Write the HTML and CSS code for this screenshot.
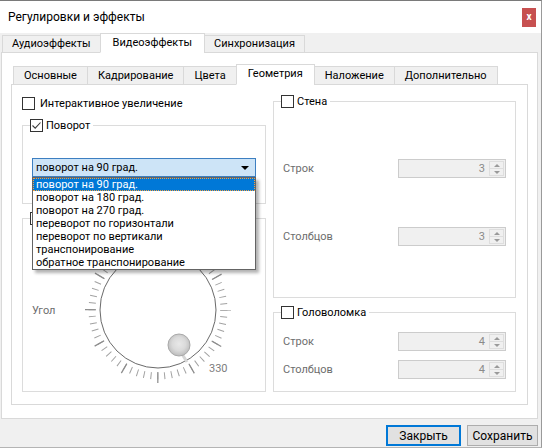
FILE: index.html
```html
<!DOCTYPE html>
<html lang="ru">
<head>
<meta charset="utf-8">
<title>Регулировки и эффекты</title>
<link rel="stylesheet" href="styles.css">
</head>
<body>
<div class="window">
  <header class="titlebar">
    <span class="title">Регулировки и эффекты</span>
    <span class="close">x</span>
  </header>
  <div class="main">
    <nav class="tabs outer-tabs">
      <span class="tab">Аудиоэффекты</span>
      <span class="tab active">Видеоэффекты</span>
      <span class="tab">Синхронизация</span>
    </nav>
    <section class="outer-pane">
      <nav class="tabs inner-tabs">
        <span class="tab">Основные</span>
        <span class="tab">Кадрирование</span>
        <span class="tab">Цвета</span>
        <span class="tab active">Геометрия</span>
        <span class="tab">Наложение</span>
        <span class="tab">Дополнительно</span>
      </nav>
      <div class="inner-pane">
        <div class="col">
          <label class="check-row"><span class="cb"></span>Интерактивное увеличение</label>
          <fieldset class="group rotate">
            <legend><span class="cb"><svg viewBox="0 0 11 11" width="11" height="11"><path d="M1.5 5.5 L4.2 8.2 L9.5 2.5" fill="none" stroke="#3a3a3a" stroke-width="1.1"/></svg></span>Поворот</legend>
            <div class="combo-wrap">
              <div class="combo"><span>поворот на 90 град.</span><span class="arrow"></span></div>
              <ul class="dropdown">
                <li class="selected">поворот на 90 град.</li>
                <li>поворот на 180 град.</li>
                <li>поворот на 270 град.</li>
                <li>переворот по горизонтали</li>
                <li>переворот по вертикали</li>
                <li>транспонирование</li>
                <li>обратное транспонирование</li>
              </ul>
            </div>
          </fieldset>
          <fieldset class="group angle">
            <legend><span class="cb"></span></legend>
            <div class="angle-row">
              <span class="muted angle-label">Угол</span>
              <svg class="dial" viewBox="0 0 160 160" width="160" height="160">
                <defs>
                  <radialGradient id="knob" cx="50%" cy="45%" r="55%">
                    <stop offset="0" stop-color="#e8e8e8"/>
                    <stop offset="0.55" stop-color="#dadada"/>
                    <stop offset="1" stop-color="#bcbcbc"/>
                  </radialGradient>
                </defs>
                <circle cx="80" cy="80" r="66" fill="none" stroke="#a2a2a2" stroke-width="7" stroke-dasharray="1 5.9115" stroke-dashoffset="0.5"/>
                <circle cx="80" cy="80" r="67.5" fill="none" stroke="#8c8c8c" stroke-width="11" stroke-dasharray="1.2 34.143" stroke-dashoffset="0.6"/>
                <circle cx="80" cy="80" r="58" fill="#fff" stroke="#6a6a6a" stroke-width="1"/>
                <line x1="104" y1="124" x2="109" y2="132" stroke="#d6d6d6" stroke-width="3"/>
                <circle cx="101" cy="115" r="11" fill="url(#knob)" stroke="#a9a9a9" stroke-width="1"/>
                <text x="131" y="142" class="dial-num">330</text>
              </svg>
            </div>
          </fieldset>
        </div>
        <div class="col">
          <fieldset class="group wall">
            <legend><span class="cb"></span>Стена</legend>
            <div class="form-grid">
              <span class="muted">Строк</span>
              <div class="spin"><span class="value">3</span><span class="spin-btns"><i class="up"></i><i class="down"></i></span></div>
              <span class="muted">Столбцов</span>
              <div class="spin"><span class="value">3</span><span class="spin-btns"><i class="up"></i><i class="down"></i></span></div>
            </div>
          </fieldset>
          <fieldset class="group puzzle">
            <legend><span class="cb"></span>Головоломка</legend>
            <div class="form-grid">
              <span class="muted">Строк</span>
              <div class="spin"><span class="value">4</span><span class="spin-btns"><i class="up"></i><i class="down"></i></span></div>
              <span class="muted">Столбцов</span>
              <div class="spin"><span class="value">4</span><span class="spin-btns"><i class="up"></i><i class="down"></i></span></div>
            </div>
          </fieldset>
        </div>
      </div>
    </section>
    <footer class="buttons">
      <button class="btn default">Закрыть</button>
      <button class="btn">Сохранить</button>
    </footer>
  </div>
</div>
</body>
</html>
```
FILE: styles.css
```css
* { box-sizing: border-box; }
html, body { margin: 0; padding: 0; }
body {
  font: 11px/1 Roboto, "Liberation Sans", sans-serif;
  color: #000;
  background: #f0f0f0;
}
.window {
  width: 542px;
  height: 448px;
  background: #f0f0f0;
  border-top: 1px solid #7a7a7a;
  border-right: 1px solid #9a9a9a;
  border-bottom: 1px solid #b4b4b4;
  display: flex;
  flex-direction: column;
}
.titlebar {
  height: 32px;
  flex: none;
  background: #fff;
  display: flex;
  align-items: center;
  justify-content: space-between;
  padding: 0 5px 0 8px;
}
.title { font-size: 12px; }
.close {
  width: 14px;
  height: 19px;
  background: #c75050;
  color: #fff;
  font-size: 10px;
  font-weight: bold;
  display: flex;
  align-items: center;
  justify-content: center;
}
.main {
  display: flex;
  flex-direction: column;
  padding: 0 3px 0 1px;
}
.tabs {
  display: flex;
  align-items: flex-end;
  position: relative;
  z-index: 1;
  margin-bottom: -1px;
}
.tab {
  display: flex;
  align-items: center;
  border: 1px solid #d9d9d9;
  background: #f0f0f0;
  margin-left: -1px;
  white-space: nowrap;
}
.tab:first-child { margin-left: 0; }
.tab.active {
  background: #fff;
  border-bottom-color: #fff;
}
.outer-tabs { padding-left: 1px; }
.outer-tabs .tab { height: 18px; padding: 0 9px 1px; }
.outer-tabs .tab.active { height: 20px; padding: 0 12px 2px; }
.inner-tabs { padding-left: 2px; }
.inner-tabs .tab { height: 19px; padding: 0 10px 0; }
.inner-tabs .tab.active { height: 21px; padding: 0 11px 2px; }

.outer-pane {
  height: 367px;
  background: #fff;
  border: 1px solid #d9d9d9;
  padding: 11px 9px 0;
}
.inner-pane {
  height: 321px;
  background: #fff;
  border: 1px solid #d9d9d9;
  padding: 10px 11px 0 10px;
  display: grid;
  grid-template-columns: 244px 243px;
  column-gap: 7px;
  align-items: start;
}
.col { display: flex; flex-direction: column; }

.cb {
  width: 13px;
  height: 13px;
  flex: none;
  border: 1px solid #333;
  background: #fff;
  display: flex;
  align-items: center;
  justify-content: center;
}
.check-row {
  display: flex;
  align-items: center;
  gap: 5px;
  height: 13px;
  margin-top: 2px;
  line-height: 13px;
}

.group {
  margin: 0;
  border: 1px solid #dcdcdc;
  padding: 0 9px;
  min-width: 0;
}
.group legend {
  display: flex;
  align-items: center;
  gap: 3px;
  height: 13px;
  line-height: 13px;
  padding: 0 3px 0 0;
  margin-left: -2px;
}
.rotate { height: 85px; margin-top: 9px; padding-top: 26px; }
.angle { height: 180px; margin-top: 8px; padding-top: 5px; }
.wall { height: 203px; padding-top: 51px; }
.puzzle { height: 86px; margin-top: 8px; padding-top: 13px; }

.combo-wrap { position: relative; }
.combo {
  height: 19px;
  border: 1px solid #3d7fc1;
  background: #cde4f7;
  display: flex;
  align-items: center;
  justify-content: space-between;
  padding: 0 6px 0 3px;
}
.arrow {
  width: 0;
  height: 0;
  border-left: 4px solid transparent;
  border-right: 4px solid transparent;
  border-top: 4px solid #000;
}
.dropdown {
  position: absolute;
  top: 100%;
  left: 0;
  width: 100%;
  margin: 0;
  padding: 0;
  list-style: none;
  background: #fff;
  border: 1px solid #646464;
  box-shadow: 3px 3px 3px rgba(0, 0, 0, 0.3);
  z-index: 5;
}
.dropdown li {
  height: 13px;
  line-height: 13px;
  padding-left: 3px;
  white-space: nowrap;
}
.dropdown li.selected {
  background: #0078d7;
  color: #fff;
  outline: 1px dotted #f5a040;
  outline-offset: -1px;
}

.muted { color: #6d6d6d; }
.angle-row { display: flex; align-items: center; }
.angle-label { flex: 0 0 46px; }
.dial { display: block; flex: none; }
.dial-num { font-size: 11px; fill: #7c7c7c; font-family: Roboto, "Liberation Sans", sans-serif; }

.form-grid {
  display: grid;
  grid-template-columns: 1fr 108px;
  align-items: center;
}
.wall .form-grid { row-gap: 49px; }
.puzzle .form-grid { row-gap: 9px; }
.spin {
  height: 19px;
  border: 1px solid #cccccc;
  background: #f0f0f0;
  display: flex;
  align-items: stretch;
}
.spin .value {
  flex: 1;
  text-align: right;
  padding-right: 4px;
  line-height: 17px;
  color: #8a8a8a;
}
.spin-btns {
  width: 15px;
  margin: 1px 1px 1px 0;
  border: 1px solid #dedede;
  display: flex;
  flex-direction: column;
}
.spin-btns i {
  flex: 1;
  display: flex;
  align-items: center;
  justify-content: center;
}
.spin-btns i + i { border-top: 1px solid #dedede; }
.spin-btns i::before {
  content: "";
  border-left: 3px solid transparent;
  border-right: 3px solid transparent;
}
.spin-btns .up::before { border-bottom: 3px solid #9a9a9a; }
.spin-btns .down::before { border-top: 3px solid #9a9a9a; }

.buttons {
  display: flex;
  justify-content: flex-end;
  gap: 6px;
  margin-top: 6px;
}
.btn {
  font: inherit;
  font-size: 12px;
  height: 21px;
  background: #e1e1e1;
  border: 1px solid #adadad;
  padding: 0;
  color: #000;
}
.btn.default { width: 75px; border: 2px solid #0078d7; }
.btn:not(.default) { width: 71px; }
```
